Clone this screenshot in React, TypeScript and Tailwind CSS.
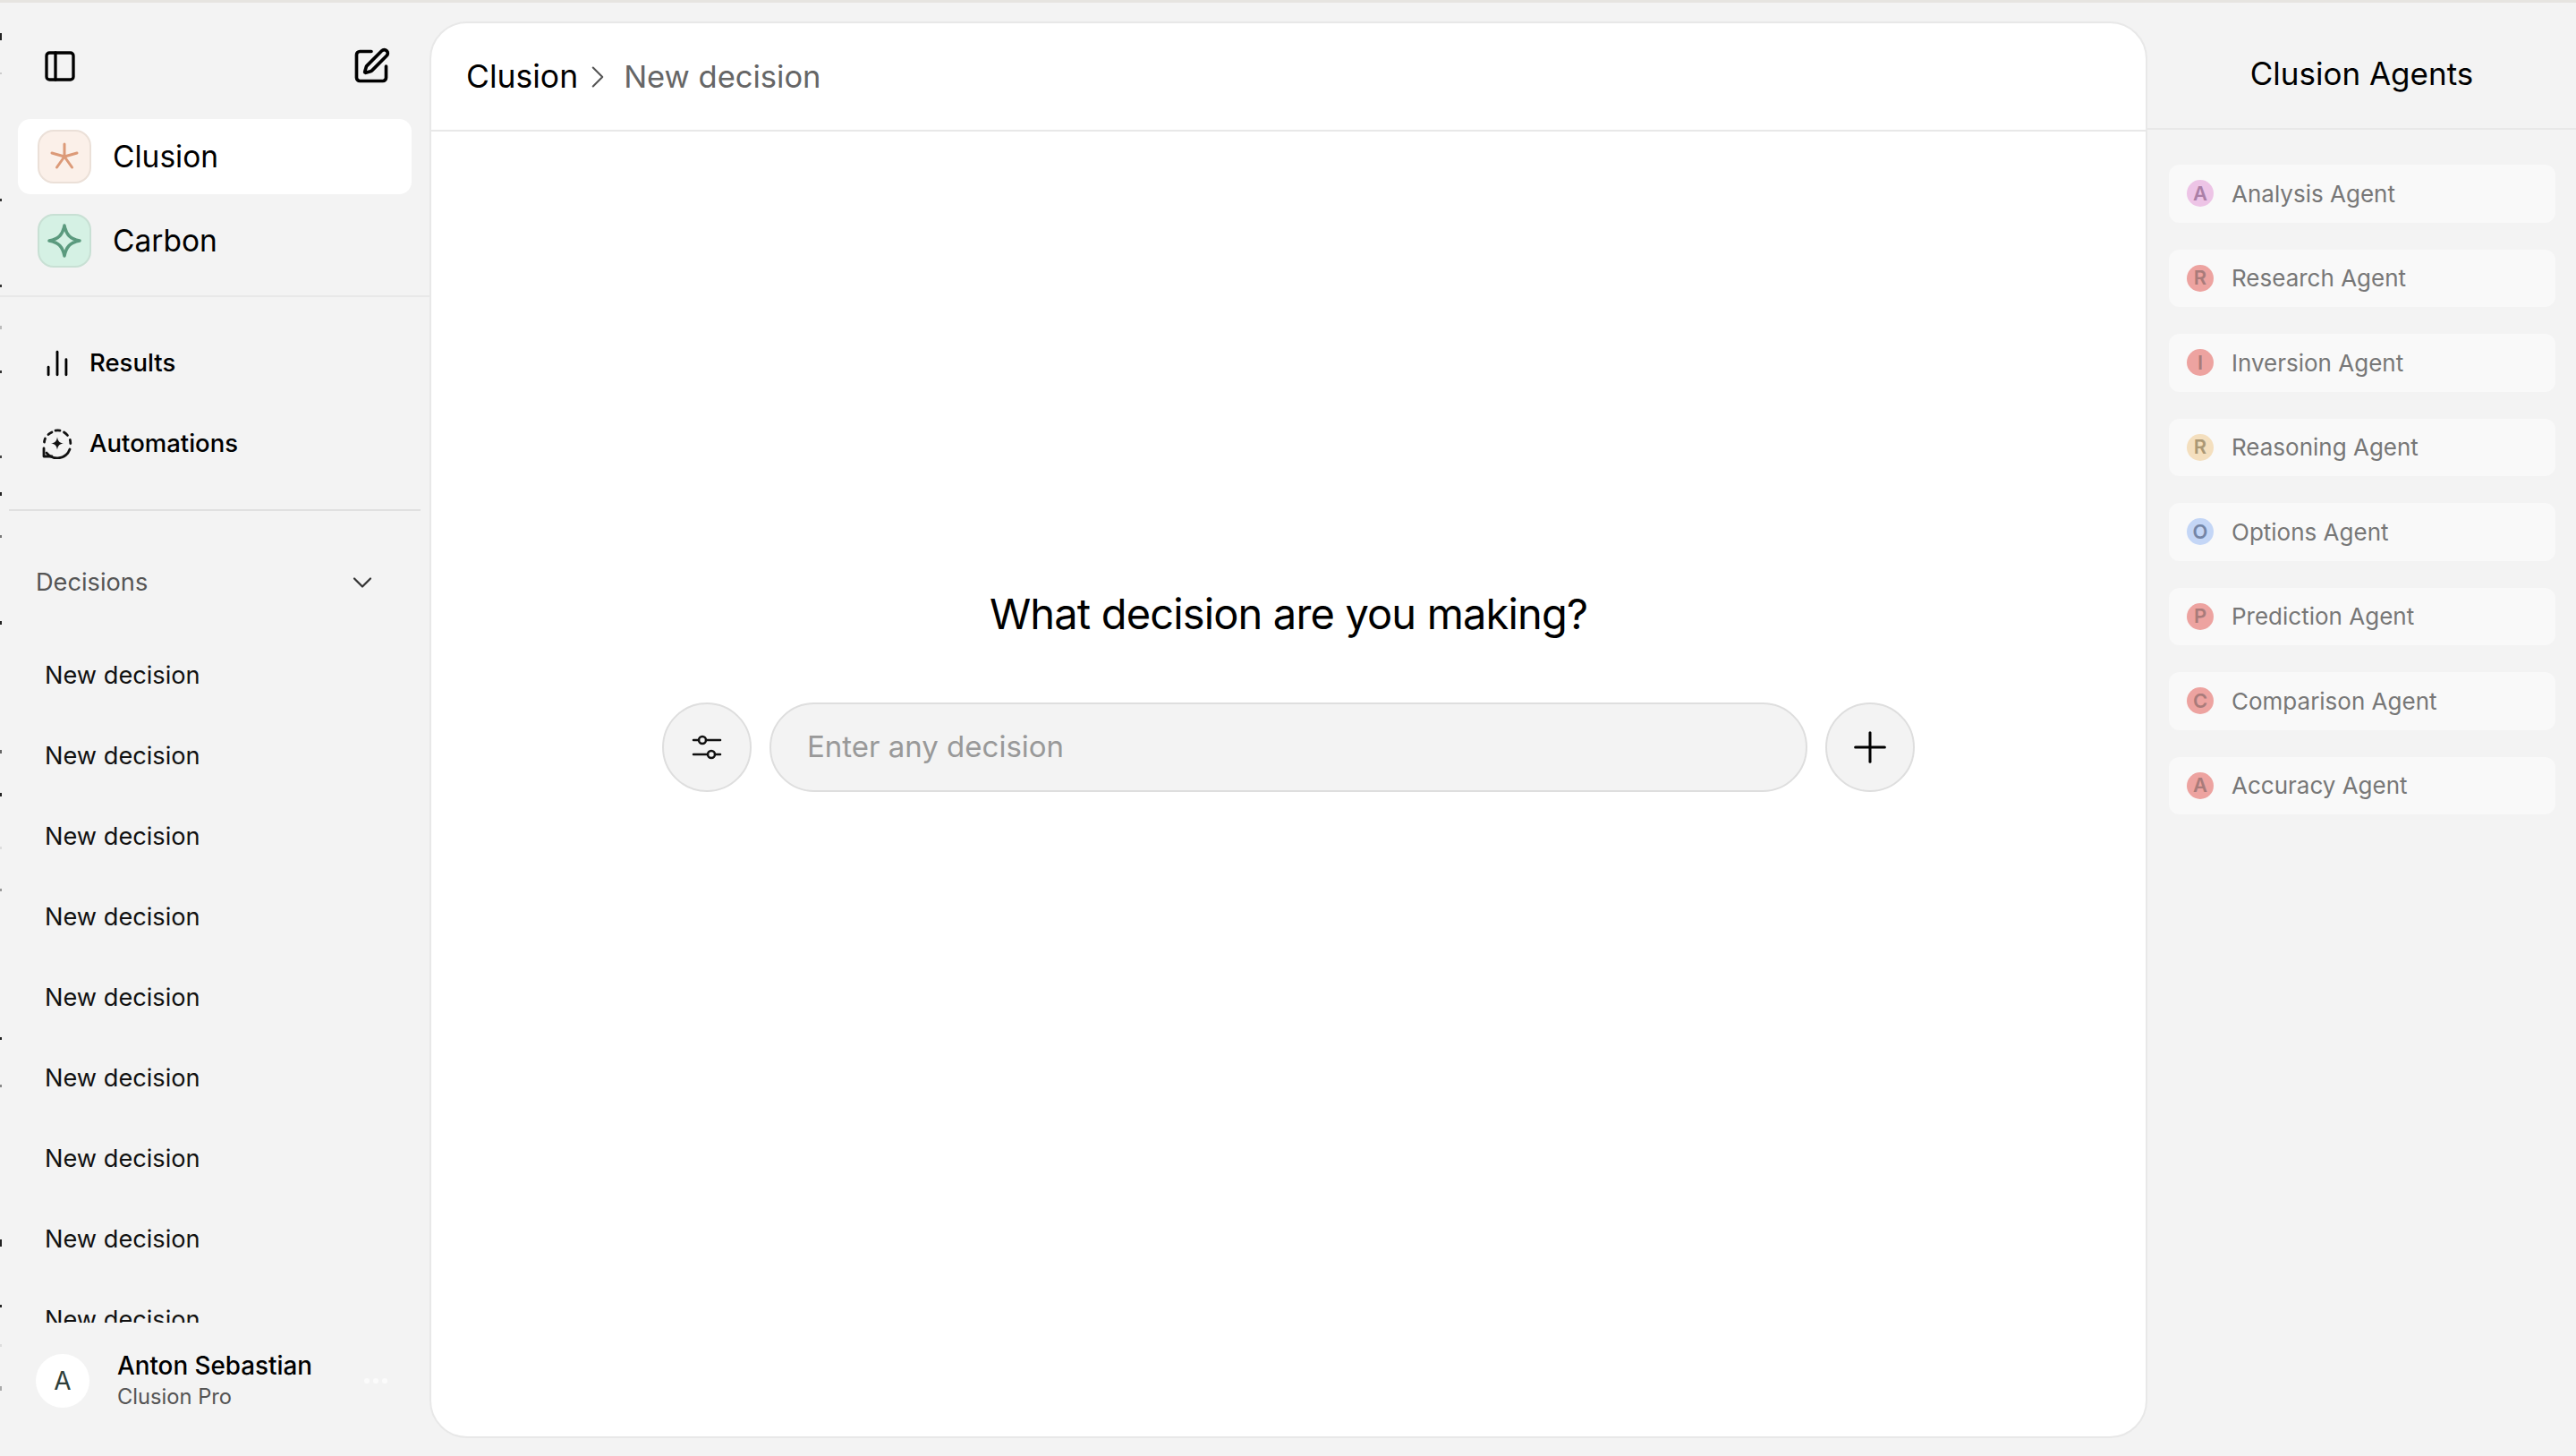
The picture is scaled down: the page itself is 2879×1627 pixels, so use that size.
import { ChartNoAxesColumn, ChevronDown, ChevronRight, PanelLeft, Plus, SquarePen } from 'lucide-react';

const agents = [
  { name: 'Analysis Agent', letter: 'A', badge: 'bg-[#edc4e6] text-[#ab7fa6]' },
  { name: 'Research Agent', letter: 'R', badge: 'bg-[#eda3a0] text-[#a97b7a]' },
  { name: 'Inversion Agent', letter: 'I', badge: 'bg-[#eda3a0] text-[#a97b7a]' },
  { name: 'Reasoning Agent', letter: 'R', badge: 'bg-[#f4dfbe] text-[#ab9875]' },
  { name: 'Options Agent', letter: 'O', badge: 'bg-[#c4d6f6] text-[#7485a6]' },
  { name: 'Prediction Agent', letter: 'P', badge: 'bg-[#eda3a0] text-[#a97b7a]' },
  { name: 'Comparison Agent', letter: 'C', badge: 'bg-[#eda3a0] text-[#a97b7a]' },
  { name: 'Accuracy Agent', letter: 'A', badge: 'bg-[#eda3a0] text-[#a97b7a]' },
];

const decisions = Array.from({ length: 9 }, () => 'New decision');

// stray marks along the left window edge: [y, height, colour]
const edgeMarks: [number, number, string][] = [
  [37, 8, '#222'], [81, 2, '#ccc'], [222, 3, '#333'], [318, 3, '#333'], [364, 4, '#bbb'],
  [414, 3, '#333'], [509, 3, '#444'], [550, 4, '#222'], [598, 3, '#777'], [694, 4, '#222'],
  [838, 4, '#666'], [886, 4, '#222'], [946, 3, '#ddd'], [993, 3, '#999'], [1159, 3, '#222'],
  [1212, 3, '#888'], [1385, 8, '#222'], [1458, 3, '#222'], [1502, 3, '#ddd'], [1549, 5, '#aaa'],
];

const AsteriskMark = () => (
  <svg width="32" height="32" viewBox="0 0 32 32" fill="none" stroke="#dc9a78" strokeWidth="3" strokeLinecap="round">
    <path d="M16 2v14M2 12l14 4M30 12l-14 4M7.500 28L16 16M24.500 28L16 16" />
  </svg>
);

const SparkMark = () => (
  <svg width="38" height="38" viewBox="0 0 38 38" fill="none" stroke="#5b9a7e" strokeWidth="3.500" strokeLinejoin="round">
    <path d="M19 2c2 10 6 15 17 17-11 2-15 7-17 17-2-10-6-15-17-17 11-2 15-7 17-17z" />
  </svg>
);

const AutomationIcon = () => (
  <svg width="34" height="34" viewBox="0 0 34 34" fill="none" stroke="#111" strokeWidth="2.800" strokeLinecap="round">
    <path d="M2.500 15a15 15 0 0 1 1-4M7 6.500a15 15 0 0 1 4-2.500M15 2.100a15 15 0 0 1 5 0M24.500 4a15 15 0 0 1 4 3.500M31.300 12.500a15 15 0 0 1 .5 4" />
    <path d="M5 27a15 15 0 0 0 26-4" />
    <path d="M2 22v9h9" strokeLinejoin="round" />
    <path d="M17 9.500c.8 4.600 2.400 6.200 7 7-4.600.8-6.200 2.400-7 7-.8-4.600-2.400-6.200-7-7 4.600-.8 6.200-2.400 7-7z" fill="#111" stroke="none" />
  </svg>
);

const FiltersIcon = () => (
  <svg width="34" height="34" viewBox="0 0 34 34" fill="none" stroke="#111" strokeWidth="2.500" strokeLinecap="round">
    <path d="M2 9h6M16 9h16M2 25h16M26 25h6" />
    <circle cx="12" cy="9" r="4" />
    <circle cx="22" cy="25" r="4" />
  </svg>
);

const App = () => {
  return (
    <div className="relative flex h-[1627px] w-full overflow-hidden border-t-[3px] border-[#e6e4e0] bg-[#f3f3f3] font-['Inter',sans-serif] text-black">
      {edgeMarks.map(([y, h, color]) => (
        <span key={y} className="absolute left-0 w-[2px]" style={{ top: y - 3, height: h, backgroundColor: color }} />
      ))}

      {/* Sidebar */}
      <aside className="flex w-[480px] shrink-0 flex-col">
        <div className="flex h-[130px] shrink-0 items-center justify-between pl-[47px] pr-[43px] pt-[11px]">
          <PanelLeft size={40} strokeWidth={2} />
          <SquarePen size={44} strokeWidth={2} />
        </div>

        <div className="flex flex-col gap-[10px] border-b-2 border-[#e8e8e8] pl-[20px] pr-[20px] pb-[19px]">
          <div className="flex h-[84px] items-center gap-[24px] rounded-[14px] bg-white pl-[22px]">
            <div className="flex h-[60px] w-[60px] items-center justify-center rounded-[18px] border-2 border-[#ebe0d8] bg-[#fbf0e9]">
              <AsteriskMark />
            </div>
            <span className="text-[33.500px]">Clusion</span>
          </div>
          <div className="flex h-[84px] items-center gap-[24px] pl-[22px]">
            <div className="flex h-[60px] w-[60px] items-center justify-center rounded-[18px] border-2 border-[#c8e0d4] bg-[#d5f1e4]">
              <SparkMark />
            </div>
            <span className="text-[33.500px]">Carbon</span>
          </div>
        </div>

        <nav className="flex flex-col gap-[56px] pt-[57px] pl-[47px] pb-[56px]">
          <div className="flex h-[34px] items-center gap-[19px] text-[27.500px] font-medium">
            <ChartNoAxesColumn size={34} strokeWidth={2} />
            <span>Results</span>
          </div>
          <div className="flex h-[34px] items-center gap-[19px] text-[27.500px] font-medium">
            <AutomationIcon />
            <span>Automations</span>
          </div>
        </nav>

        <div className="mx-[10px] h-[2px] shrink-0 bg-[#e0e0e0]" />

        <div className="flex h-[160px] shrink-0 items-center justify-between pl-[40px] pr-[57px]">
          <span className="text-[27.200px] text-[#555]">Decisions</span>
          <ChevronDown size={36} strokeWidth={1.500} className="text-[#333]" />
        </div>

        <div className="flex h-[747px] shrink-0 flex-col gap-[56px] overflow-hidden pl-[50px] pt-[7px]">
          {decisions.map((label, i) => (
            <div key={i} className="h-[34px] shrink-0 text-[27.200px] leading-[34px] text-[#111]">
              {label}
            </div>
          ))}
        </div>

        <div className="flex items-center pl-[40px] pr-[47px] pt-[30px]">
          <div className="flex h-[60px] w-[60px] shrink-0 items-center justify-center rounded-full bg-white text-[28px] text-[#2f3f3a]">
            A
          </div>
          <div className="ml-[31px] flex min-w-0 flex-1 flex-col">
            <span className="text-[27.800px] leading-[36px] font-medium">Anton Sebastian</span>
            <span className="text-[23.700px] leading-[34px] text-[#555]">Clusion Pro</span>
          </div>
          <div className="flex items-center gap-[4px]">
            <span className="h-[6px] w-[6px] rounded-full bg-[#fbfbfb]" />
            <span className="h-[6px] w-[6px] rounded-full bg-[#fbfbfb]" />
            <span className="h-[6px] w-[6px] rounded-full bg-[#fbfbfb]" />
          </div>
        </div>
      </aside>

      {/* Main card */}
      <main className="mt-[21px] mb-[20px] flex w-[1920px] shrink-0 flex-col overflow-hidden rounded-[42px] border-2 border-[#e8e8e8] bg-white">
        <header className="flex h-[121px] shrink-0 items-center border-b-2 border-[#e8e8e8] pl-[39px]">
          <span className="text-[35.500px]">Clusion</span>
          <ChevronRight size={42} strokeWidth={1.200} className="ml-[1px] text-[#555]" />
          <span className="ml-[8px] text-[34.500px] text-[#666]">New decision</span>
        </header>
        <div className="flex flex-1 flex-col items-center pt-[509px]">
          <h1 className="text-[47px] leading-[60px] font-normal tracking-[-0.85px]">What decision are you making?</h1>
          <div className="mt-[69px] flex items-center gap-[20px]">
            <button className="flex h-[100px] w-[100px] items-center justify-center rounded-full border-2 border-[#dedede] bg-[#f3f3f3]">
              <FiltersIcon />
            </button>
            <div className="flex h-[100px] w-[1160px] items-center rounded-full border-2 border-[#dedede] bg-[#f3f3f3] pl-[40px] text-[33px] text-[#999]">
              Enter any decision
            </div>
            <button className="flex h-[100px] w-[100px] items-center justify-center rounded-full border-2 border-[#dedede] bg-[#f3f3f3]">
              <Plus size={56} strokeWidth={1.300} />
            </button>
          </div>
        </div>
      </main>

      {/* Agents panel */}
      <aside className="flex min-w-0 flex-1 flex-col">
        <div className="flex h-[142px] shrink-0 items-center justify-center border-b-2 border-[#e8e8e8] pt-[18px] text-[35px]">
          Clusion Agents
        </div>
        <div className="flex flex-col gap-[30px] pt-[39px] pl-[24px] pr-[23px]">
          {agents.map((agent) => (
            <div key={agent.name} className="flex h-[64.500px] items-center gap-[20px] rounded-[12px] bg-[#f9f9f9] pl-[20px] text-[26px] text-[#777]">
              <div className={`flex h-[30px] w-[30px] items-center justify-center rounded-full text-[22px] font-semibold ${agent.badge}`}>
                {agent.letter}
              </div>
              <span>{agent.name}</span>
            </div>
          ))}
        </div>
      </aside>
    </div>
  );
};

export default App;
